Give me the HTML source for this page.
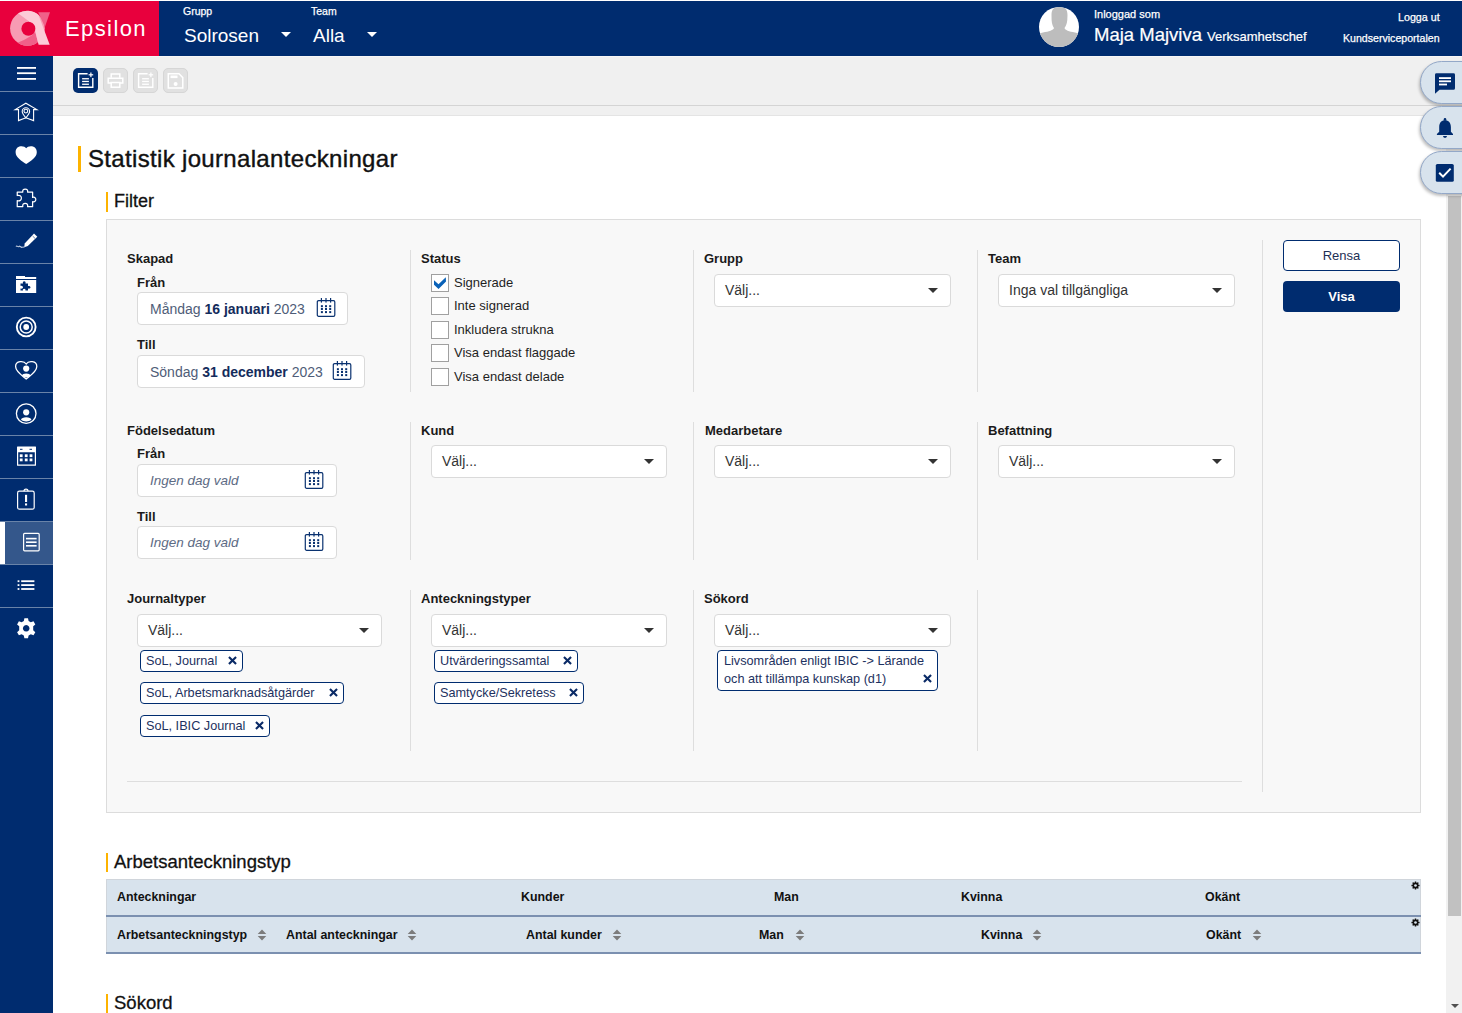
<!DOCTYPE html>
<html><head><meta charset="utf-8">
<style>
*{box-sizing:border-box;margin:0;padding:0}
html,body{width:1462px;height:1013px;overflow:hidden;background:#fff;font-family:"Liberation Sans",sans-serif;position:relative}
.a{position:absolute}
.t{position:absolute;white-space:nowrap;line-height:1}
#hdr{left:0;top:1px;width:1462px;height:55px;background:#002c6f}
#logo{left:0;top:1px;width:159px;height:55px;background:#e8003d}
#side{left:0;top:56px;width:53px;height:957px;background:#002c6f}
#tool{left:53px;top:56px;width:1409px;height:60px;background:#f0f0f0;border-top:1px solid #f7f7f7}
.yb{position:absolute;background:#fdb300;width:2px}
#fbox{left:106px;top:219px;width:1315px;height:594px;background:#f8f8f8;border:1px solid #dcdcdc}
.vl{position:absolute;width:1px;background:#dedede}
.lbl{position:absolute;white-space:nowrap;line-height:1;font-size:13px;font-weight:bold;color:#1a1a1a}
.inp{position:absolute;background:#fff;border:1px solid #dadada;border-radius:4px;height:33px}
.sel{position:absolute;background:#fff;border:1px solid #dadada;border-radius:4px;height:33px}
.sel .v{position:absolute;left:10px;top:8px;font-size:14px;color:#333;line-height:1;white-space:nowrap}
.sel .ar{position:absolute;right:12px;top:13px;width:0;height:0;border-left:5px solid transparent;border-right:5px solid transparent;border-top:5px solid #333}
.cb{position:absolute;width:18px;height:18px;border:1px solid #a0a0a0;background:#fff}
.cbt{position:absolute;font-size:13px;color:#1f1f1f;line-height:1;white-space:nowrap}
.chip{position:absolute;height:22px;border:1.3px solid #002c6f;border-radius:4px;background:#fff}
.chipt{font-size:12.7px;color:#1d3160}
.th{position:absolute;font-size:12.4px;font-weight:bold;color:#111;line-height:1;white-space:nowrap}
.pill{position:absolute;left:1420px;width:50px;height:43px;border-radius:22px 0 0 22px;background:#d8e3ed;border:1px solid #93a8c8;box-shadow:-1px 2px 3px rgba(0,0,0,0.25)}
</style></head><body>
<div id="hdr" class="a"></div>
<div id="logo" class="a"></div>
<svg class="a" style="left:0;top:0" width="60" height="56" viewBox="0 0 60 56">
  <clipPath id="ringclip"><circle cx="27.45" cy="28.35" r="17.35"/></clipPath>
  <circle cx="27.45" cy="28.35" r="17.35" fill="#f79bb3"/>
  <path d="M10 48 L17.5 42.8 Q24.5 40.3 31.8 35.6 L35.2 31.5 L38.6 44.8 L38.6 50 L5 50 Z" fill="#f06089" clip-path="url(#ringclip)"/>
  <circle cx="28.4" cy="28.7" r="7" fill="#e8003d"/>
  <path d="M38.2 12.2 L50 12.2 L44.9 27 Z" fill="#f06089"/>
  <path d="M18 13.3 A17.35 17.35 0 0 1 38.5 15 L49.7 44.8 L38.6 44.8 L35.2 31.5 A7 7 0 0 0 29.5 21.8 Z" fill="#fccbd7"/>
</svg>
<div class="t" style="left:65px;top:17.5px;font-size:22px;color:#fff;letter-spacing:1.4px">Epsilon</div>
<div class="t" style="left:183px;top:6px;font-size:10.5px;color:#fff;-webkit-text-stroke:0.25px #fff">Grupp</div>
<div class="t" style="left:184px;top:26px;font-size:19px;color:#fff">Solrosen</div>
<div class="a" style="left:281px;top:32px;width:0;height:0;border-left:5px solid transparent;border-right:5px solid transparent;border-top:5px solid #fff"></div>
<div class="t" style="left:311px;top:6px;font-size:10.5px;color:#fff;-webkit-text-stroke:0.25px #fff">Team</div>
<div class="t" style="left:313px;top:26px;font-size:19px;color:#fff">Alla</div>
<div class="a" style="left:367px;top:32px;width:0;height:0;border-left:5px solid transparent;border-right:5px solid transparent;border-top:5px solid #fff"></div>
<svg class="a" style="left:1039px;top:7px" width="40" height="40" viewBox="0 0 40 40">
  <clipPath id="avc"><circle cx="20" cy="20" r="20"/></clipPath>
  <circle cx="20" cy="20" r="20" fill="#fff"/>
  <g clip-path="url(#avc)" fill="#bdbdbd">
    <path d="M12.5 8 C12.5 2 15 0 20.5 0 C26 0 28.5 2 28.5 8 L28.3 13 C28 17 26.5 19.5 25.5 21 C26 23 30 24.5 36 25.5 L42 27 L42 42 L-2 42 L-2 27 L4 25.5 C10 24.5 14.5 23 15 21 C14 19.5 12.8 17 12.6 13 Z"/>
  </g>
</svg>
<div class="t" style="left:1094px;top:9px;font-size:11px;color:#fff;-webkit-text-stroke:0.25px #fff">Inloggad som</div>
<div class="t" style="left:1094px;top:25.5px;font-size:18.5px;color:#fff;-webkit-text-stroke:0.2px #fff">Maja Majviva</div>
<div class="t" style="left:1207px;top:30px;font-size:13px;color:#fff;-webkit-text-stroke:0.2px #fff">Verksamhetschef</div>
<div class="t" style="left:1398px;top:12px;font-size:10.7px;color:#fff;-webkit-text-stroke:0.25px #fff">Logga ut</div>
<div class="t" style="left:1343px;top:33px;font-size:10.6px;color:#fff;-webkit-text-stroke:0.25px #fff">Kundserviceportalen</div>
<div id="side" class="a"></div>
<div class="a" style="left:0;top:521px;width:53px;height:43px;background:#34578b"></div>
<div class="a" style="left:0;top:522px;width:5px;height:42px;background:#fff"></div>
<svg class="a" style="left:0;top:0" width="53" height="1013" viewBox="0 0 53 1013">
 <g fill="#6983a8">
  <rect x="0" y="91" width="53" height="1"/><rect x="0" y="134" width="53" height="1"/><rect x="0" y="177" width="53" height="1"/>
  <rect x="0" y="220" width="53" height="1"/><rect x="0" y="263" width="53" height="1"/><rect x="0" y="306" width="53" height="1"/>
  <rect x="0" y="349" width="53" height="1"/><rect x="0" y="392" width="53" height="1"/><rect x="0" y="435" width="53" height="1"/>
  <rect x="0" y="478" width="53" height="1"/><rect x="0" y="521" width="53" height="1"/><rect x="0" y="564" width="53" height="1"/>
  <rect x="0" y="607" width="53" height="1"/>
 </g>
 <!-- hamburger -->
 <g fill="#fff"><rect x="17" y="67" width="19" height="1.8"/><rect x="17" y="72.3" width="19" height="1.8"/><rect x="17" y="78" width="19" height="1.8"/></g>
 <!-- home pin -->
 <g fill="none" stroke="#fff" stroke-width="1.1" stroke-linejoin="miter">
  <path d="M15.1 109.6 L25.86 103.2 L36.9 109.6 L33.6 109.6 L33.6 120.6 L25.86 117.8 L18.5 120.6 L18.5 109.6 Z"/>
  <path d="M25.86 117.8 C23 114.5 22.2 113 22.2 111.5 A3.7 3.7 0 0 1 29.6 111.5 C29.6 113 28.7 114.5 25.86 117.8 Z"/>
  <circle cx="25.86" cy="111.1" r="1.9"/>
 </g>
 <!-- heart -->
 <path fill="#fff" d="M26.2 148.3 C24.3 145.3 15.6 145 15.6 152.3 C15.6 157.5 22 161.5 26.2 164 C30.4 161.5 36.8 157.5 36.8 152.3 C36.8 145 28.1 145.3 26.2 148.3 Z"/>
 <!-- puzzle -->
 <path fill="none" stroke="#fff" stroke-width="1.25" stroke-linejoin="round" d="M17.25 192.1 L22.8 192.1 C22.4 190.2 23.3 189 25.2 189 C27.1 189 28 190.2 27.6 192.1 L32.6 192.1 L32.6 197.4 C34.8 196.8 35.8 198 35.8 199.5 C35.8 201 34.8 202.2 32.6 201.6 L32.6 206.7 L27.6 206.7 C28 204.5 27 203.3 25.2 203.3 C23.4 203.3 22.4 204.5 22.8 206.7 L17.25 206.7 L17.25 200.6 C19.8 201.3 21.4 200.2 21.4 198 C21.4 195.8 19.8 194.8 17.25 195.5 Z"/>
 <!-- pen -->
 <path fill="#fff" d="M34 233.4 L37.3 236.7 L27.8 246 L24.2 247.3 L24.7 243.6 Z"/>
 <path d="M32.6 236 L35 238.4" stroke="#002c6f" stroke-width="0.6"/>
 <path fill="none" stroke="#c8d2e2" stroke-width="1.1" d="M16 246.5 C17 245 18 247.5 19 246.5 C20 245.3 21 247.8 22 247.3 L24.5 247"/>
 <!-- folder puzzle -->
 <g fill="#fff">
  <rect x="16" y="276" width="9" height="2"/><rect x="16" y="277" width="20.2" height="2"/>
  <path d="M16 280 L36.2 280 L36.2 293 L16 293 Z M20.5 283.5 L20.5 286 C22 285.5 23 286.5 23 287.3 C23 288.1 22 289 20.5 288.5 L20.5 290.5 L23 290.5 C22.5 289.5 23.3 288.8 24.2 288.8 C25.1 288.8 25.9 289.5 25.4 290.5 L28 290.5 L28 288.5 C29.5 289 30.5 288.2 30.5 287.3 C30.5 286.4 29.5 285.6 28 286 L28 283.5 L25.5 283.5 C26 282 25.1 281.3 24.2 281.3 C23.3 281.3 22.5 282 23 283.5 Z" fill-rule="evenodd"/>
 </g>
 <!-- target -->
 <g fill="none" stroke="#fff"><circle cx="26.2" cy="327" r="9.4" stroke-width="1.9"/><circle cx="26.2" cy="327" r="6" stroke-width="1.5"/></g>
 <circle cx="26.2" cy="327" r="2.9" fill="#fff"/>
 <!-- heart person -->
 <path fill="none" stroke="#fff" stroke-width="1.3" d="M26.2 364 C24 360.5 15.6 360.5 15.6 366.5 C15.6 371.5 22 375.5 26.2 379 C30.4 375.5 36.8 371.5 36.8 366.5 C36.8 360.5 28.4 360.5 26.2 364 Z"/>
 <circle cx="26.2" cy="368.6" r="3.1" fill="#fff"/>
 <path fill="#fff" d="M22 375.5 C22 372.8 30.4 372.8 30.4 375.5 C29 377 27.5 377.5 26.2 377.5 C25 377.5 23.3 377 22 375.5 Z"/>
 <!-- person circle -->
 <circle cx="26.2" cy="413.6" r="9.8" fill="none" stroke="#fff" stroke-width="1.3"/>
 <circle cx="26.2" cy="412.3" r="3.1" fill="#fff"/>
 <path fill="#fff" d="M21 419.8 C21 416.3 31.4 416.3 31.4 419.8 C30 421 28 421.5 26.2 421.5 C24.4 421.5 22.4 421 21 419.8 Z"/>
 <!-- calendar -->
 <g fill="#fff">
  <path fill-rule="evenodd" d="M17.5 446.5 L35.5 446.5 Q36 446.5 36 447 L36 465.3 Q36 465.8 35.5 465.8 L17.5 465.8 Q17 465.8 17 465.3 L17 447 Q17 446.5 17.5 446.5 Z M18.2 452.3 L18.2 464.6 L34.8 464.6 L34.8 452.3 Z"/>
  <rect x="19.8" y="454.3" width="2.8" height="2.8"/><rect x="24.8" y="454.3" width="2.8" height="2.8"/><rect x="29.6" y="454.3" width="2.8" height="2.8"/>
  <rect x="19.8" y="458.5" width="2.8" height="2.8"/><rect x="24.8" y="458.5" width="2.8" height="2.8"/><rect x="29.6" y="458.5" width="2.8" height="2.8"/>
 </g>
 <g fill="#002c6f"><rect x="20" y="448.8" width="2.5" height="1"/><rect x="29.5" y="448.8" width="2.5" height="1"/></g>
 <!-- clipboard alert -->
 <rect x="17.6" y="491.2" width="16.6" height="18" rx="1.8" fill="none" stroke="#fff" stroke-width="1.2"/>
 <path d="M24 491.2 A2 2 0 0 1 28 491.2" fill="none" stroke="#fff" stroke-width="1.2"/>
 <rect x="25" y="494.8" width="2.1" height="7.2" fill="#fff"/><rect x="25" y="503.4" width="2.1" height="2.1" fill="#fff"/>
 <!-- doc active -->
 <rect x="23.6" y="533.4" width="15.6" height="17.4" rx="1" fill="none" stroke="#fff" stroke-width="1.2"/>
 <g fill="#fff"><rect x="26" y="537.8" width="10.6" height="1.6"/><rect x="26" y="541.4" width="10.6" height="1.6"/><rect x="26" y="545" width="10.6" height="1.6"/></g>
 <!-- list -->
 <g fill="#fff">
  <rect x="17.6" y="580.3" width="1.8" height="1.8"/><rect x="17.6" y="584.2" width="1.8" height="1.8"/><rect x="17.6" y="588.1" width="1.8" height="1.8"/>
  <rect x="21.2" y="580.3" width="13.2" height="1.8"/><rect x="21.2" y="584.2" width="13.2" height="1.8"/><rect x="21.2" y="588.1" width="13.2" height="1.8"/>
 </g>
 <!-- gear -->
 <g transform="translate(26.2 628.3)">
  <path fill="#fff" fill-rule="evenodd" d="M-1.8 -10 L1.8 -10 L2.4 -7.2 L4.6 -6 L7.3 -7 L9.1 -3.9 L7 -2 L7 2 L9.1 3.9 L7.3 7 L4.6 6 L2.4 7.2 L1.8 10 L-1.8 10 L-2.4 7.2 L-4.6 6 L-7.3 7 L-9.1 3.9 L-7 2 L-7 -2 L-9.1 -3.9 L-7.3 -7 L-4.6 -6 L-2.4 -7.2 Z M0 -3.3 A3.3 3.3 0 1 0 0.01 -3.3 Z"/>
 </g>
</svg>
<div id="tool" class="a"></div>
<div class="a" style="left:53px;top:105px;width:1409px;height:1px;background:#d4d4d4"></div>
<div class="a" style="left:53px;top:115px;width:1409px;height:1px;background:#e4e4e4"></div>
<div class="a" style="left:73px;top:68px;width:25px;height:25px;border-radius:5px;background:#002c6f"></div>
<div class="a" style="left:103px;top:68px;width:25px;height:25px;border-radius:5px;background:#e1e1e1;border:1px solid #d6d6d6"></div>
<div class="a" style="left:133px;top:68px;width:25px;height:25px;border-radius:5px;background:#e1e1e1;border:1px solid #d6d6d6"></div>
<div class="a" style="left:163px;top:68px;width:25px;height:25px;border-radius:5px;background:#e1e1e1;border:1px solid #d6d6d6"></div>
<svg class="a" style="left:53px;top:55px" width="150" height="50" viewBox="53 55 150 50">
 <g fill="none" stroke="#fff" stroke-width="1.4">
  <path d="M87.6 73.8 L78.6 73.8 L78.6 87.2 L92.8 87.2 L92.8 78.1"/>
  <path d="M147.6 73.8 L138.6 73.8 L138.6 87.2 L152.8 87.2 L152.8 78.1"/>
 </g>
 <g fill="#fff">
  <rect x="82.1" y="78.1" width="6.8" height="1.3"/><rect x="82.1" y="80.8" width="6.8" height="1.3"/><rect x="82.1" y="83.6" width="6.8" height="1.3"/>
  <rect x="88.6" y="74.2" width="4.6" height="1.2"/><rect x="90.3" y="72.5" width="1.2" height="4.6"/>
  <rect x="142.1" y="78.1" width="6.8" height="1.3"/><rect x="142.1" y="80.8" width="6.8" height="1.3"/><rect x="142.1" y="83.6" width="6.8" height="1.3"/>
  <rect x="148.6" y="74.2" width="4.6" height="1.2"/><rect x="150.3" y="72.5" width="1.2" height="4.6"/>
 </g>
 <g fill="none" stroke="#fff" stroke-width="1.5">
  <path d="M111.2 77.7 L111.2 74 L119.8 74 L119.8 77.7"/>
  <path d="M111 83 L108.2 83 L108.2 78.3 L122.8 78.3 L122.8 83 L120 83"/>
  <rect x="111.2" y="82.5" width="8.6" height="4.7"/>
 </g>
 <path fill="none" stroke="#fff" stroke-width="1.5" d="M168.3 73.8 L179 73.8 L182.8 77.6 L182.8 88 L168.3 88 Z"/>
 <rect x="170.5" y="75.5" width="7" height="2.6" fill="#fff"/>
 <circle cx="175.6" cy="84" r="2" fill="#fff"/>
</svg>
<div class="yb" style="left:78px;top:146px;height:26px;width:3px"></div>
<div class="t" style="left:88px;top:147px;font-size:24px;letter-spacing:0.33px;color:#111;-webkit-text-stroke:0.4px #111">Statistik journalanteckningar</div>
<div class="yb" style="left:106px;top:192px;height:20px"></div>
<div class="t" style="left:114px;top:191.5px;font-size:18px;color:#111;-webkit-text-stroke:0.3px #111">Filter</div>
<svg width="0" height="0" style="position:absolute">
 <defs>
  <symbol id="cal" viewBox="0 0 20 21">
   <rect x="1.3" y="3.6" width="17.5" height="15.7" rx="1.3" fill="none" stroke="#0a3270" stroke-width="1.2"/>
   <g fill="#0a3270">
    <rect x="4.8" y="1" width="1.2" height="4.6"/><rect x="9.4" y="1" width="1.2" height="4.6"/><rect x="14" y="1" width="1.2" height="4.6"/>
    <rect x="4.9" y="8.2" width="2" height="2"/><rect x="9" y="8.2" width="2" height="2"/><rect x="13.2" y="8.2" width="2" height="2"/>
    <rect x="4.9" y="11" width="2" height="2"/><rect x="9" y="11" width="2" height="2"/><rect x="13.2" y="11" width="2" height="2"/>
    <rect x="4.9" y="14.1" width="2" height="2"/><rect x="9" y="14.1" width="2" height="2"/><rect x="13.2" y="14.1" width="2" height="2"/>
   </g>
  </symbol>
  <symbol id="x" viewBox="0 0 9 9">
   <path d="M1.7 1.7 L7.3 7.3 M7.3 1.7 L1.7 7.3" stroke="#0a2a66" stroke-width="2.1" stroke-linecap="square"/>
  </symbol>
 </defs>
</svg>
<div id="fbox" class="a"></div>
<!-- dividers -->
<div class="vl" style="left:410px;top:250px;height:142px"></div>
<div class="vl" style="left:693px;top:250px;height:142px"></div>
<div class="vl" style="left:977px;top:250px;height:142px"></div>
<div class="vl" style="left:410px;top:422px;height:138px"></div>
<div class="vl" style="left:693px;top:422px;height:138px"></div>
<div class="vl" style="left:977px;top:422px;height:138px"></div>
<div class="vl" style="left:410px;top:590px;height:161px"></div>
<div class="vl" style="left:693px;top:590px;height:161px"></div>
<div class="vl" style="left:977px;top:590px;height:161px"></div>
<div class="vl" style="left:1262px;top:240px;height:552px"></div>
<div class="a" style="left:127px;top:781px;width:1115px;height:1px;background:#dedede"></div>

<!-- row 1 -->
<div class="lbl" style="left:127px;top:252px">Skapad</div>
<div class="lbl" style="left:137px;top:276px">Från</div>
<div class="inp" style="left:137px;top:292px;width:211px"></div>
<div class="t" style="left:150px;top:302px;font-size:14px;color:#4f5d78">Måndag <b style="color:#142c5c">16 januari</b> 2023</div>
<svg class="a" style="left:316px;top:297px" width="20" height="21"><use href="#cal"/></svg>
<div class="lbl" style="left:137px;top:338px">Till</div>
<div class="inp" style="left:137px;top:355px;width:228px"></div>
<div class="t" style="left:150px;top:365px;font-size:14px;color:#4f5d78">Söndag <b style="color:#142c5c">31 december</b> 2023</div>
<svg class="a" style="left:332px;top:360px" width="20" height="21"><use href="#cal"/></svg>

<div class="lbl" style="left:421px;top:252px">Status</div>
<div class="cb" style="left:431px;top:274px"></div>
<svg class="a" style="left:431px;top:274px" width="18" height="18" viewBox="0 0 18 18"><path d="M3 6.3 L7.5 10.3 L14.8 3.2 L15 7.5 L7.5 15 L3 10.8 Z" fill="#0a62b8"/></svg>
<div class="cbt" style="left:454px;top:276px">Signerade</div>
<div class="cb" style="left:431px;top:297px"></div>
<div class="cbt" style="left:454px;top:299px">Inte signerad</div>
<div class="cb" style="left:431px;top:321px"></div>
<div class="cbt" style="left:454px;top:323px">Inkludera strukna</div>
<div class="cb" style="left:431px;top:344px"></div>
<div class="cbt" style="left:454px;top:346px">Visa endast flaggade</div>
<div class="cb" style="left:431px;top:368px"></div>
<div class="cbt" style="left:454px;top:370px">Visa endast delade</div>

<div class="lbl" style="left:704px;top:252px">Grupp</div>
<div class="sel" style="left:714px;top:274px;width:237px"><span class="v">Välj...</span><span class="ar"></span></div>
<div class="lbl" style="left:988px;top:252px">Team</div>
<div class="sel" style="left:998px;top:274px;width:237px"><span class="v">Inga val tillgängliga</span><span class="ar"></span></div>

<div class="a" style="left:1283px;top:240px;width:117px;height:31px;border:1.5px solid #002c6f;border-radius:4px;background:#fff"></div>
<div class="t" style="left:1283px;top:249px;width:117px;text-align:center;font-size:13px;color:#1d2f55">Rensa</div>
<div class="a" style="left:1283px;top:281px;width:117px;height:31px;border-radius:4px;background:#002c6f"></div>
<div class="t" style="left:1283px;top:290px;width:117px;text-align:center;font-size:13px;font-weight:bold;color:#fff">Visa</div>

<!-- row 2 -->
<div class="lbl" style="left:127px;top:424px">Födelsedatum</div>
<div class="lbl" style="left:137px;top:447px">Från</div>
<div class="inp" style="left:137px;top:464px;width:200px"></div>
<div class="t" style="left:150px;top:474px;font-size:13.5px;font-style:italic;color:#5d6b84">Ingen dag vald</div>
<svg class="a" style="left:304px;top:469px" width="20" height="21"><use href="#cal"/></svg>
<div class="lbl" style="left:137px;top:510px">Till</div>
<div class="inp" style="left:137px;top:526px;width:200px"></div>
<div class="t" style="left:150px;top:536px;font-size:13.5px;font-style:italic;color:#5d6b84">Ingen dag vald</div>
<svg class="a" style="left:304px;top:531px" width="20" height="21"><use href="#cal"/></svg>

<div class="lbl" style="left:421px;top:424px">Kund</div>
<div class="sel" style="left:431px;top:445px;width:236px"><span class="v">Välj...</span><span class="ar"></span></div>
<div class="lbl" style="left:705px;top:424px">Medarbetare</div>
<div class="sel" style="left:714px;top:445px;width:237px"><span class="v">Välj...</span><span class="ar"></span></div>
<div class="lbl" style="left:988px;top:424px">Befattning</div>
<div class="sel" style="left:998px;top:445px;width:237px"><span class="v">Välj...</span><span class="ar"></span></div>

<!-- row 3 -->
<div class="lbl" style="left:127px;top:592px">Journaltyper</div>
<div class="sel" style="left:137px;top:614px;width:245px"><span class="v">Välj...</span><span class="ar"></span></div>
<div class="chip" style="left:140px;top:650px;width:103px"></div>
<div class="t chipt" style="left:146px;top:655px">SoL, Journal</div>
<svg class="a" style="left:227.5px;top:655.5px" width="9" height="9"><use href="#x"/></svg>
<div class="chip" style="left:140px;top:682px;width:204px"></div>
<div class="t chipt" style="left:146px;top:687px">SoL, Arbetsmarknadsåtgärder</div>
<svg class="a" style="left:328.5px;top:687.5px" width="9" height="9"><use href="#x"/></svg>
<div class="chip" style="left:140px;top:715px;width:130px"></div>
<div class="t chipt" style="left:146px;top:720px">SoL, IBIC Journal</div>
<svg class="a" style="left:254.5px;top:720.5px" width="9" height="9"><use href="#x"/></svg>

<div class="lbl" style="left:421px;top:592px">Anteckningstyper</div>
<div class="sel" style="left:431px;top:614px;width:236px"><span class="v">Välj...</span><span class="ar"></span></div>
<div class="chip" style="left:434px;top:650px;width:144px"></div>
<div class="t chipt" style="left:440px;top:655px">Utvärderingssamtal</div>
<svg class="a" style="left:562.5px;top:655.5px" width="9" height="9"><use href="#x"/></svg>
<div class="chip" style="left:434px;top:682px;width:150px"></div>
<div class="t chipt" style="left:440px;top:687px">Samtycke/Sekretess</div>
<svg class="a" style="left:568.5px;top:687.5px" width="9" height="9"><use href="#x"/></svg>

<div class="lbl" style="left:704px;top:592px">Sökord</div>
<div class="sel" style="left:714px;top:614px;width:237px"><span class="v">Välj...</span><span class="ar"></span></div>
<div class="chip" style="left:717px;top:650px;width:221px;height:41px"></div>
<div class="t chipt" style="left:724px;top:655px">Livsområden enligt IBIC -&gt; Lärande</div>
<div class="t chipt" style="left:724px;top:673px">och att tillämpa kunskap (d1)</div>
<svg class="a" style="left:922.5px;top:673.5px" width="9" height="9"><use href="#x"/></svg>
<svg width="0" height="0" style="position:absolute">
 <defs>
  <symbol id="sort" viewBox="0 0 10 12">
   <path d="M5 0.5 L9.3 5 L0.7 5 Z M5 11.5 L9.3 7 L0.7 7 Z" fill="#7c7c7c"/>
  </symbol>
  <symbol id="gear" viewBox="0 0 10 10">
   <g transform="translate(5 5)" fill="#111">
    <circle r="3.3"/>
    <rect x="-0.85" y="-4.5" width="1.7" height="9" rx="0.3"/>
    <rect x="-0.85" y="-4.5" width="1.7" height="9" rx="0.3" transform="rotate(45)"/>
    <rect x="-0.85" y="-4.5" width="1.7" height="9" rx="0.3" transform="rotate(90)"/>
    <rect x="-0.85" y="-4.5" width="1.7" height="9" rx="0.3" transform="rotate(135)"/>
    <circle r="1.5" fill="#d8e3ed"/>
   </g>
  </symbol>
 </defs>
</svg>
<div class="yb" style="left:106px;top:853px;height:19px"></div>
<div class="t" style="left:114px;top:853px;font-size:18.5px;color:#111;-webkit-text-stroke:0.3px #111">Arbetsanteckningstyp</div>
<div class="a" style="left:106px;top:879px;width:1315px;height:75px;background:#d8e3ed;border-left:1px solid #d0d5db;border-top:1px solid #d0d5db;border-right:1px solid #d0d5db"></div>
<div class="a" style="left:106px;top:915px;width:1315px;height:2px;background:#7b90b0"></div>
<div class="a" style="left:106px;top:952px;width:1315px;height:2px;background:#7b90b0"></div>
<div class="th" style="left:117px;top:890.5px">Anteckningar</div>
<div class="th" style="left:521px;top:890.5px">Kunder</div>
<div class="th" style="left:774px;top:890.5px">Man</div>
<div class="th" style="left:961px;top:890.5px">Kvinna</div>
<div class="th" style="left:1205px;top:890.5px">Okänt</div>
<div class="th" style="left:117px;top:928.5px">Arbetsanteckningstyp</div>
<svg class="a" style="left:257px;top:929px" width="10" height="12"><use href="#sort"/></svg>
<div class="th" style="left:286px;top:928.5px">Antal anteckningar</div>
<svg class="a" style="left:407px;top:929px" width="10" height="12"><use href="#sort"/></svg>
<div class="th" style="left:526px;top:928.5px">Antal kunder</div>
<svg class="a" style="left:612px;top:929px" width="10" height="12"><use href="#sort"/></svg>
<div class="th" style="left:759px;top:928.5px">Man</div>
<svg class="a" style="left:795px;top:929px" width="10" height="12"><use href="#sort"/></svg>
<div class="th" style="left:981px;top:928.5px">Kvinna</div>
<svg class="a" style="left:1032px;top:929px" width="10" height="12"><use href="#sort"/></svg>
<div class="th" style="left:1206px;top:928.5px">Okänt</div>
<svg class="a" style="left:1252px;top:929px" width="10" height="12"><use href="#sort"/></svg>
<svg class="a" style="left:1410.5px;top:880.5px" width="9" height="9"><use href="#gear"/></svg>
<svg class="a" style="left:1410.5px;top:917.5px" width="9" height="9"><use href="#gear"/></svg>

<div class="yb" style="left:106px;top:994px;height:19px"></div>
<div class="t" style="left:114px;top:994px;font-size:18.5px;color:#111;-webkit-text-stroke:0.3px #111">Sökord</div>

<!-- scrollbar -->
<div class="a" style="left:1446px;top:116px;width:16px;height:897px;background:#f1f1f1"></div>
<div class="a" style="left:1448px;top:196px;width:13px;height:720px;background:#c1c1c1"></div>
<div class="a" style="left:1451px;top:1004px;width:0;height:0;border-left:4px solid transparent;border-right:4px solid transparent;border-top:4px solid #505050"></div>

<!-- pills -->
<div class="pill" style="top:61px"></div>
<div class="pill" style="top:106px"></div>
<div class="pill" style="top:151px"></div>
<svg class="a" style="left:1420px;top:55px" width="42" height="145" viewBox="1420 55 42 145">
 <g transform="translate(0 0.7)">
 <path fill="#002c6f" d="M1436.5 72.6 L1453.5 72.6 Q1455 72.6 1455 74 L1455 87.5 Q1455 89 1453.5 89 L1439.5 89 L1435 93 L1435 74 Q1435 72.6 1436.5 72.6 Z"/>
 <g fill="#fff"><rect x="1439" y="76.5" width="12" height="1.8"/><rect x="1439" y="79.7" width="12" height="1.8"/><rect x="1439" y="82.9" width="8" height="1.8"/></g>
 </g>
 <circle cx="1445" cy="119.4" r="1.3" fill="#002c6f"/>
 <path fill="#002c6f" d="M1445 120.3 C1441.5 120.3 1439.2 123 1439.2 127 L1439.2 131.8 L1436.9 134 L1436.9 134.9 L1453 134.9 L1453 134 L1450.9 131.8 L1450.9 127 C1450.9 123 1448.5 120.3 1445 120.3 Z"/>
 <path fill="#002c6f" d="M1443 136.1 L1447 136.1 A2 1.8 0 0 1 1443 136.1 Z"/>
 <rect x="1435.8" y="164" width="18" height="17.8" rx="1.6" fill="#002c6f"/>
 <path d="M1439.2 172.8 L1443 176.6 L1450.6 168.6" fill="none" stroke="#fff" stroke-width="2"/>
</svg>
</body></html>
